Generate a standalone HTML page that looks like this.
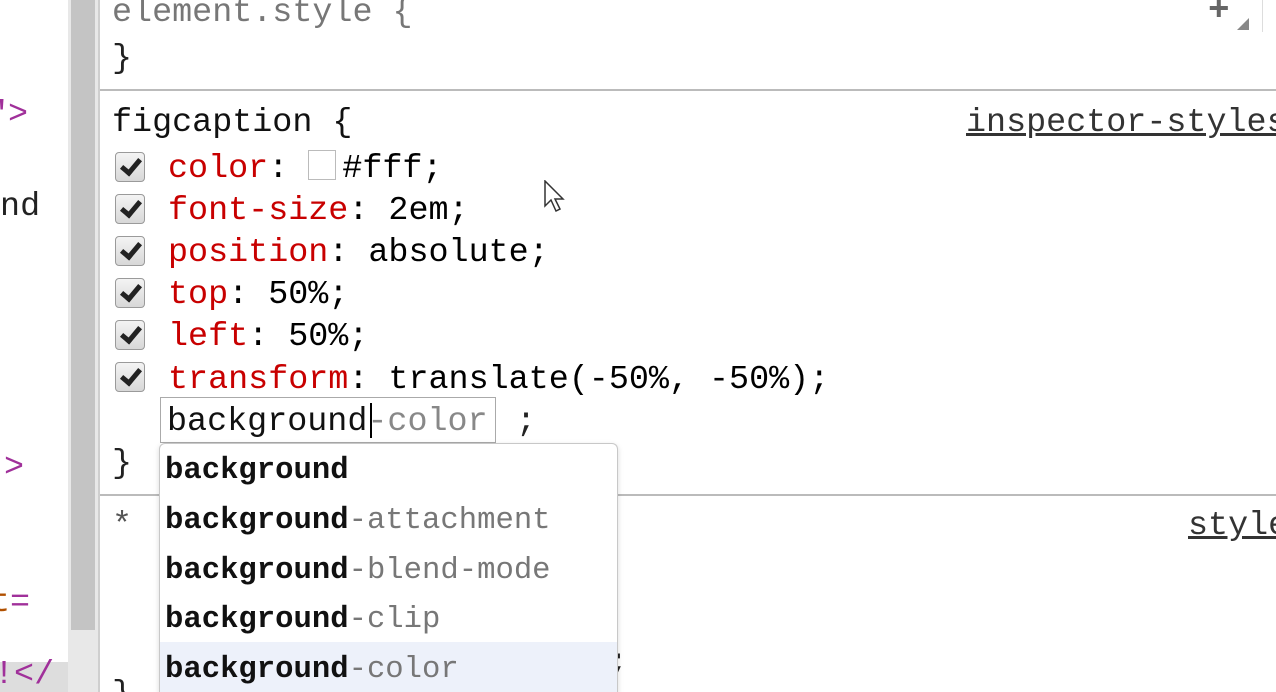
<!DOCTYPE html>
<html style="overflow:hidden;height:692px"><head><style>
body{margin:0;width:1276px;height:692px;overflow:hidden;background:#fff;position:relative;font-family:"Liberation Mono",monospace;font-size:33.4px;}
.a{position:absolute;white-space:pre;line-height:42px;}
.k{color:#c80000}
.cb{position:absolute;left:115px;width:30px;height:30px;border:1px solid #9a9a9a;border-radius:4px;background:linear-gradient(#f4f4f4,#d8d8d8);box-sizing:border-box;}
.cb:after{content:"";position:absolute;left:9px;top:2px;width:7px;height:15px;border:solid #222;border-width:0 5px 5px 0;transform:rotate(40deg);}
.dd{position:absolute;left:159px;top:443px;width:457px;height:249px;border:1px solid #c8c8c8;border-bottom:none;border-radius:6px 6px 0 0;background:#fff;box-shadow:0 2px 6px rgba(0,0,0,.15);overflow:hidden;font-size:30.6px}
.r{position:absolute;left:5px;height:50px;line-height:50px;white-space:pre;color:#777;}
.r b{color:#111}
</style></head><body>
<div class="a" style="left:-12px;top:94px;color:#a0309a">"&gt;</div>
<div class="a" style="left:-20px;top:186px;color:#222">und</div>
<div class="a" style="left:4px;top:447px;color:#a0309a">&gt;</div>
<div class="a" style="left:-10px;top:582px;color:#a0309a"><span style="color:#b05000">t</span>=</div>
<div style="position:absolute;left:0;top:662px;width:68px;height:30px;background:#ddd"></div>
<div class="a" style="left:-6px;top:654px;color:#a0309a">!&lt;/</div>
<div style="position:absolute;left:68px;top:0;width:30px;height:692px;background:#e8e8e8"></div>
<div style="position:absolute;left:71px;top:0;width:24px;height:630px;background:#c4c4c4"></div>
<div style="position:absolute;left:98px;top:0;width:2px;height:692px;background:#cfcfcf"></div>
<div class="a" style="left:112px;top:-8px;color:#777">element.style {</div>
<div class="a" style="left:112px;top:38px;color:#222">}</div>
<div class="a" style="left:1208px;top:-10px;color:#666;font-weight:bold;font-size:36px">+</div>
<div style="position:absolute;left:1237px;top:18px;border-left:12px solid transparent;border-bottom:12px solid #888"></div>
<div style="position:absolute;left:1262px;top:0;width:1px;height:32px;background:#ddd"></div>
<div style="position:absolute;left:100px;top:89px;width:1176px;height:2px;background:#bbb"></div>
<div class="a" style="left:112px;top:102px;color:#111">figcaption {</div>
<div class="a" style="left:966px;top:102px;color:#333;text-decoration:underline">inspector-styles</div>
<div class="cb" style="top:152px"></div>
<div class="a" style="left:168px;top:148px"><span class="k">color</span>: <span style="display:inline-block;width:26px;height:28px;border:1px solid #bbb;vertical-align:-3px;margin-right:6px"></span>#fff;</div>
<div class="cb" style="top:194px"></div>
<div class="a" style="left:168px;top:190px"><span class="k">font-size</span>: 2em;</div>
<div class="cb" style="top:236px"></div>
<div class="a" style="left:168px;top:232px"><span class="k">position</span>: absolute;</div>
<div class="cb" style="top:278px"></div>
<div class="a" style="left:168px;top:274px"><span class="k">top</span>: 50%;</div>
<div class="cb" style="top:320px"></div>
<div class="a" style="left:168px;top:316px"><span class="k">left</span>: 50%;</div>
<div class="cb" style="top:362px"></div>
<div class="a" style="left:168px;top:359px"><span class="k">transform</span>: translate(-50%, -50%);</div>
<svg style="position:absolute;left:543px;top:180px" width="24" height="34"><path d="M2 1 L2 26 L8 20 L13 31 L17 29 L12 19 L20 19 Z" fill="#fff" stroke="#333" stroke-width="1.5"/></svg>
<div style="position:absolute;left:160px;top:397px;width:336px;height:46px;border:1px solid #aaa;box-sizing:border-box;background:#fff"></div>
<div class="a" style="left:167px;top:401px;color:#111">background<span style="color:#888">-color</span></div>
<div style="position:absolute;left:370px;top:403px;width:2px;height:35px;background:#000"></div>
<div class="a" style="left:496px;top:401px;color:#222"> ;</div>
<div class="a" style="left:112px;top:443px;color:#222">}</div>
<div style="position:absolute;left:100px;top:494px;width:1176px;height:2px;background:#bbb"></div>
<div class="a" style="left:112px;top:505px;color:#555">* .</div>
<div class="a" style="left:1188px;top:505px;color:#333;text-decoration:underline">style</div>
<div class="a" style="left:608px;top:642px;color:#222">;</div>
<div class="a" style="left:112px;top:674px;color:#222">}</div>
<div class="dd">
<div class="r" style="top:2px"><b>background</b></div>
<div class="r" style="top:52px"><b>background</b>-attachment</div>
<div class="r" style="top:102px"><b>background</b>-blend-mode</div>
<div class="r" style="top:151px"><b>background</b>-clip</div>
<div style="position:absolute;left:0;top:198px;width:457px;height:60px;background:#edf1fa"></div>
<div class="r" style="top:201px"><b>background</b>-color</div>
</div>
</body></html>
